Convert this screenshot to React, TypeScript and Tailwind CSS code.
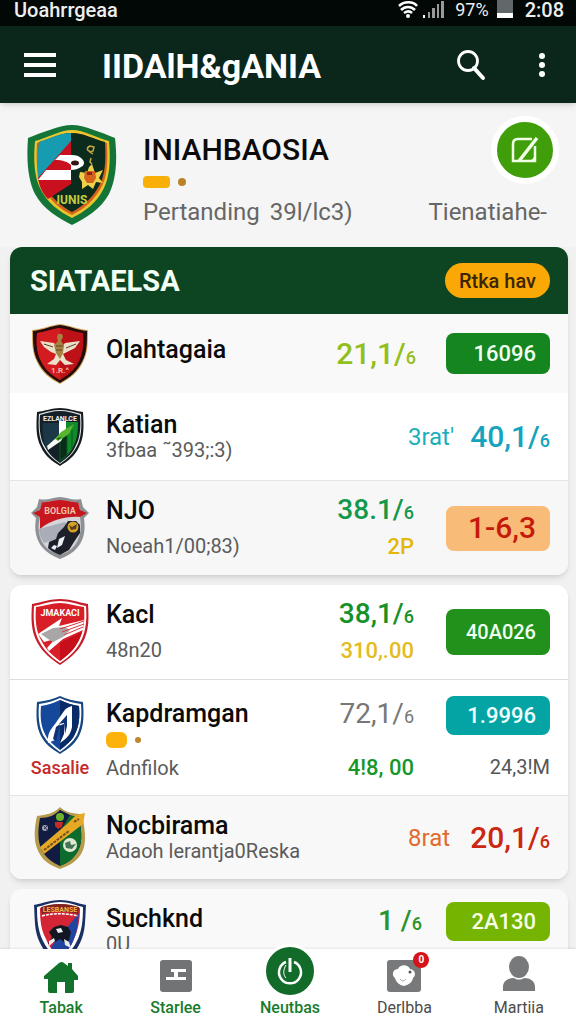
import type { ReactNode } from 'react';

const crestFont = 'font-[Roboto,sans-serif] font-bold';

function MainCrest() {
  return (
    <svg viewBox="0 0 90 102" className="h-[102px] w-[90px] shrink-0" role="img" aria-label="Club crest">
      <path d="M45 1C57 1 75 9 88 14c3 26 0 44-6 56-8 15-23 24-37 31C31 94 16 85 8 70 2 58-1 40 1 14 14 9 33 1 45 1Z" fill="#157538" />
      <path d="M45 6c12 0 25 8 37 11 2 22 0 37-5 47-7 15-20 24-32 30C33 88 20 79 13 64 8 54 6 39 8 17 20 14 33 6 45 6Z" fill="#e9c62d" />
      <path d="M45 9c12 0 23 7 35 10 1 20 0 33-5 43-7 14-18 23-30 29C33 85 22 76 15 62c-5-10-6-23-5-43C22 16 33 9 45 9Z" fill="#d5631d" />
      <path d="M45 9c12 0 21 6 33 9 1 20 0 32-5 42-7 14-17 22-28 28C34 82 24 74 17 60c-5-10-6-22-5-42C24 15 33 9 45 9Z" fill="#0b2c1d" />
      <path d="M44 9v10L11 54C10 43 10 30 12 18 24 14 33 9 44 9Z" fill="#169bb0" />
      <path d="M44 17v43L21 75C15 69 12 61 11 54Z" fill="#c9101f" />
      <path d="M28 36 33 31h12c4 0 7 1 9 3 4 3 4 7 0 9-3 2-6 3-10 3v-5c-3-3-8-5-16-5Z" fill="#fff" />
      <path d="M19 46h25v10H11Z" fill="#fff" />
      <ellipse cx="48" cy="39" rx="4" ry="2.500" fill="#35151a" />
      <path d="M63 22c-4 2-3 5 0 5m0-5 4 1-1 4-3 1 3 2m-2 4-1 4 2 2" stroke="#c9a83c" strokeWidth="1.500" fill="none" />
      <path d="m53 48 7 1 2-6 3-3 2 6 1 3 8-3-4 8 4 5-7-1-3 7-5-4-6 4v-7l-3-5Z" fill="#efd04a" />
      <path d="M58 47h10l1 7-3 5h-6l-3-5Z" fill="#d4611c" />
      <path d="M60 48h5v3h-5z" fill="#8e231d" />
      <text x="45" y="80" textAnchor="middle" fontSize="12" fill="#c8cb3f" className={crestFont}>IUNIS</text>
    </svg>
  );
}

function EagleCrest() {
  return (
    <svg viewBox="0 0 58 62" className="h-[62px] w-[58px]" role="img" aria-label="Eagle crest">
      <path d="M29 1c9 1 17 5 28 6 0 13 0 23-5 32-5 11-14 17-23 22C19 56 11 50 6 39 1 30 1 20 1 7 12 6 20 2 29 1Z" fill="#d5a95c" />
      <path d="M29 2c9 1 17 5 27 6 0 13 0 22-5 31-5 10-13 16-22 21C20 55 12 49 7 39 2 30 2 20 2 8 12 7 20 3 29 2Z" fill="#270c0c" />
      <path d="M29 5c8 1 15 4 23 5 1 12 0 20-4 28-4 9-11 14-19 19-8-5-15-10-19-19C6 30 5 22 6 10c8-1 15-4 23-5Z" fill="#bd1118" />
      <path d="M29 5v52C21 52 14 47 10 38 6 30 5 22 6 10c8-1 15-4 23-5Z" fill="#d31c20" />
      <path d="m9 18 14 2 2 4h6l3-4 15-2-5 7-8 4-4 2 3 6 8 4-9 1-5-5-4 5-9-1 7-5 2-5-5-2-7-5Z" fill="#ece0ca" />
      <path d="M27 11h4l1 3-2 4 3 4-1 8-3 6-4-6-2-8 4-4-1-4Z" fill="#a78243" />
      <path d="M25 23h7m-7 4h6M13 21l9 3m23-3-10 4" stroke="#58422a" strokeWidth="1" />
      <text x="29" y="50" textAnchor="middle" fontSize="8" fill="#f6b4a8" className={crestFont}>1.R.^</text>
    </svg>
  );
}

function GreenCrest() {
  return (
    <svg viewBox="0 0 48 60" className="h-[60px] w-12" role="img" aria-label="Green striped crest">
      <path d="M24 1c8 0 15 3 23 4 1 15 1 26-4 35-4 9-11 14-19 19-8-5-15-10-19-19C0 31 0 20 1 5 9 4 16 1 24 1Z" fill="#151c20" />
      <path d="M24 3c7 0 14 2 21 4 1 14 0 24-4 32-4 8-10 13-17 18C17 52 11 47 7 39 3 31 2 21 3 7c7-2 14-4 21-4Z" fill="#e6e8e8" />
      <path d="M24 4c7 0 13 2 20 4 1 13 0 23-4 30-3 8-9 13-16 18-7-5-12-10-16-18C4 31 3 21 4 8c7-2 13-4 20-4Z" fill="#142028" />
      <path d="M7 16h16v18L10 41C7 33 6 25 7 16Z" fill="#1b3848" />
      <path d="M24 15h18c0 10-1 17-4 23-3 7-8 12-14 16Z" fill="#118b2a" />
      <path d="M24 34v20l7-6V28Zm12-11v19" stroke="#075b21" strokeWidth="1" fill="#0a2c18" />
      <path d="M23 14h7v8l-7 10Z" fill="#fff" />
      <path d="m11 39 9-8 8-4-3 7-13 9Z" fill="#f8faf5" />
      <path d="m19 32 6-7 13-8-5 10-11 7Z" fill="#58b52e" />
      <path d="m21 31 5-1-4 3Z" fill="#194e18" />
      <text x="24" y="14" textAnchor="middle" fontSize="7" fill="#eee" className={crestFont}>EZLANLCE</text>
    </svg>
  );
}

function RiderCrest() {
  return (
    <svg viewBox="0 0 60 64" className="h-16 w-[60px]" role="img" aria-label="Rider crest">
      <path d="M30 1c7 0 12 4 21 2l2 8 6 6-5 5c2 14-1 23-7 30-4 5-10 8-17 11-8-3-14-7-18-12-6-8-8-17-6-29l-5-5 6-6 2-8c9 2 14-2 21-2Z" fill="#8e9193" />
      <path d="M30 4c7 0 12 3 18 2l2 8 4 3-4 4c2 12 0 21-5 28-4 5-9 8-15 10-6-2-12-5-16-10-5-7-7-16-4-28l-4-4 4-3 2-8c6 1 11-2 18-2Z" fill="#d3d5da" />
      <path d="M10 33V21l-7-4 7-3 2-8c6 1 11-2 18-2s12 3 18 2l2 8 7 3-7 4c-14-1-29 3-40 12Z" fill="#c7161d" />
      <path d="m9 33 26-7 2 3-10 14-13 4c-3-4-5-9-5-14Z" fill="#a8adb8" />
      <path d="m18 52 1-6 7-3 2-6 6-6 4-6 8 0 4 4v8l-6 9-5 8-9 5c-5-2-9-4-12-7Z" fill="#1d2029" />
      <path d="m29 43 6-3-3 9-5 3Zm-5 6 3 1-2 4-4-2Z" fill="#eef0f3" />
      <circle cx="43" cy="31" r="5.500" fill="#d6a128" />
      <path d="m39 29 3 2 5-3-1 5-5 1Z" fill="#574020" />
      <text x="30" y="18" textAnchor="middle" fontSize="9" fill="#efc3aa" className={crestFont}>BOLGIA</text>
    </svg>
  );
}

function RedCrest() {
  return (
    <svg viewBox="0 0 58 66" className="h-[66px] w-[58px]" role="img" aria-label="Red crest">
      <path d="M29 0c9 0 18 3 28 5 1 15 1 27-5 38-5 10-14 17-23 23C20 60 11 53 6 43 0 32 0 20 1 5 11 3 20 0 29 0Z" fill="#c81c28" />
      <path d="M29 2c9 0 17 3 26 5 1 14 0 25-5 35s-12 16-21 22C20 58 13 52 8 42 3 32 2 21 3 7c9-2 17-5 26-5Z" fill="#fff" />
      <path d="M29 4c8 0 16 3 24 4 1 13 0 24-5 33-5 10-11 15-19 21-8-6-14-11-19-21C5 32 4 21 5 8c8-1 16-4 24-4Z" fill="#d81e27" />
      <path d="m7 35 24-16-3 8 25-6-1 10-20 9-14 12-2-3 8-9-11 3Z" fill="#fff" />
      <path d="m10 35 12-6 12-1 5 3-7 7-10 5-5-3Z" fill="#a8a6a7" />
      <path d="m29 30 24-8m-22 11 22-8m-20 11 19-8" stroke="#d83a40" strokeWidth="1" />
      <path d="M29 44v18c8-6 14-11 19-21l3-8Z" fill="#c60f1b" />
      <text x="29" y="17" textAnchor="middle" fontSize="9" fill="#fff" className={crestFont}>JMAKACI</text>
    </svg>
  );
}

function BlueCrest() {
  return (
    <svg viewBox="0 0 48 58" className="h-[58px] w-12" role="img" aria-label="Blue crest">
      <path d="M24 0c6 3 14 5 23 6 1 14 1 24-4 34-4 8-11 13-19 18C16 53 9 48 5 40 0 30 0 20 1 6c9-1 17-3 23-6Z" fill="#174780" />
      <path d="M24 2c6 3 13 5 21 6 1 13 0 22-4 31-4 7-10 12-17 17C17 51 11 46 7 39 3 30 2 21 3 8c8-1 15-3 21-6Z" fill="#fff" />
      <path d="M24 4c6 3 12 5 19 6 1 12 0 20-4 28-3 7-9 11-15 16C18 49 12 45 9 38 5 30 4 22 5 10c7-1 13-3 19-6Z" fill="#15489b" />
      <path d="M24 4v50c6-5 12-9 15-16 4-8 5-16 4-28-7-1-13-3-19-6Z" fill="#092b68" />
      <path d="M36 10v21c-1 6-4 11-12 16l4-9v-10l-6 2-3 14-7 3c-1-8 2-13 7-19l9-13c2-3 5-4 8-5Z" fill="#fff" />
      <path d="M31 19v11l-2 8-1-11-5 1Z" fill="#0d3275" />
      <path d="m20 31 4-3-4 17-3-2Z" fill="#0d3275" />
    </svg>
  );
}

function SashCrest() {
  return (
    <svg viewBox="0 0 52 64" className="h-16 w-[52px]" role="img" aria-label="Crest with sash">
      <path d="M26 1c5 5 13 7 22 7 4 20 5 33-3 43-5 6-11 9-19 12-8-3-15-7-19-13C0 40-1 28 3 10c9-1 18-3 23-9Z" fill="#b59b4b" />
      <path d="M26 4c5 4 11 6 19 7 3 17 4 28-3 37-4 6-9 9-16 12-7-3-12-7-16-12-6-9-7-20-4-36 9 0 15-3 20-8Z" fill="#121b42" />
      <path d="M26 4v56c7-3 12-6 16-12 7-9 6-20 3-37-8-1-14-3-19-7Z" fill="#0c6b2d" />
      <path d="m26 4 10 5-12 20-10 1Z" fill="#121b42" />
      <path d="m6 41 4 7 39-30 2-11-9 2-9 9Z" fill="#e6a825" />
      <path d="m10 44 25-19m5-9 5-3" stroke="#73501f" strokeWidth="2" strokeDasharray="3 1" />
      <circle cx="26" cy="11" r="4" fill="#6eb12d" />
      <path d="M21 16h8l-1 5-4 2-3-3Z" fill="#c62b24" />
      <circle cx="11" cy="22" r="3" fill="#a4a1b1" />
      <path d="m10 20 3 4m-3-1 3-3" stroke="#35355b" />
      <circle cx="36" cy="39" r="7" fill="#dfe9cf" />
      <path d="m31 37 5-2 1 4 5-1-4 5-6-1Z" fill="#43745a" />
    </svg>
  );
}

function TwoToneCrest() {
  return (
    <svg viewBox="0 0 54 64" className="h-16 w-[54px]" role="img" aria-label="Red and blue crest">
      <path d="M27 1c8 0 17 3 26 5-1 14 0 26-6 38-4 9-10 15-20 19C17 59 11 53 7 44 1 32 2 20 1 6c9-2 18-5 26-5Z" fill="#1a2f62" />
      <path d="M27 3c8 0 15 3 23 5 0 13-1 24-6 34-4 8-9 14-17 18-8-4-13-10-17-18C5 32 4 21 4 8c8-2 15-5 23-5Z" fill="#fff" />
      <path d="M27 5c7 0 13 2 20 4 0 12-2 22-6 31-3 8-7 13-14 17-7-4-11-9-14-17C8 31 7 21 7 9c7-2 13-4 20-4Z" fill="#d32535" />
      <path d="M46 14c-1 11-2 19-5 26-3 8-7 13-14 17-4-3-7-6-9-9Z" fill="#2045a0" />
      <path d="M8 8c13-4 25-4 38 0l-1 7c-12-3-24-3-36 0Z" fill="#7d251e" />
      <path d="M9 17c12-3 24-3 36 0" stroke="#fff" strokeWidth="1.500" strokeDasharray="3 1" fill="none" />
      <path d="m16 33 5-5 7-2 7 2 3 5-2 8-4 3-5-4-5 3-7 2 4-7Z" fill="#111622" />
      <path d="m23 30 5-1 2 4-5 1m-9 8 5-3 1 3-6 5m15-7 5 3 2 6-6-3" fill="#e9ebed" />
      <text x="27" y="13" textAnchor="middle" fontSize="7" fill="#f3b448" className={crestFont}>LESBANSE</text>
    </svg>
  );
}

function Crest({ children, label }: { children: ReactNode; label?: string }) {
  return (
    <div className="flex w-[60px] shrink-0 flex-col items-center">
      {children}
      {label && <span className="mt-0.5 text-lg leading-6 font-medium text-[#c52a2a]">{label}</span>}
    </div>
  );
}

function Names({ name, sub, spaced }: { name: string; sub?: string; spaced?: boolean }) {
  return (
    <div className={spaced ? 'flex min-w-0 flex-1 flex-col gap-2.5' : 'flex min-w-0 flex-1 flex-col'}>
      <h3 className="text-[25px] leading-[26px] font-medium whitespace-nowrap text-[#0b0b0b]">{name}</h3>
      {sub && <p className="text-xl leading-6 whitespace-nowrap text-[#5b5b5b]">{sub}</p>}
    </div>
  );
}

function Ratio({ value, className }: { value: string; className: string }) {
  return (
    <span className={`whitespace-nowrap ${className}`}>
      {value}/<span className="text-lg leading-6">6</span>
    </span>
  );
}

function Score({ className, children }: { className: string; children: ReactNode }) {
  return (
    <button type="button" className={`w-26 shrink-0 rounded-lg pr-3.5 text-right ${className}`}>
      {children}
    </button>
  );
}

const row = 'flex items-center gap-4 pr-[18px] pl-5';

function NavItem({ label, green, children }: { label: string; green?: boolean; children: ReactNode }) {
  return (
    <a href="#" className="flex flex-1 flex-col items-center justify-end">
      {children}
      <span className={green ? 'text-base leading-5 font-medium text-[#197c2c]' : 'text-base leading-5 text-[#4b4b4b]'}>{label}</span>
    </a>
  );
}

export default function App() {
  return (
    <div className="flex h-dvh flex-col bg-[#f1f1f1] font-[Roboto,sans-serif]">
      <div className="flex h-[26px] shrink-0 items-start justify-between bg-[#020806] pr-3 pl-3.5 text-xl leading-5 font-medium text-[#eeeeee]">
        <span>Uoahrrgeaa</span>
        <div className="flex items-start gap-2">
          <svg viewBox="0 0 50 20" className="h-5 w-[50px]" aria-hidden="true">
            <path d="M2 6c5-5 14-5 18 0M4 10c4-4 10-4 14 0M7 13c3-2 6-2 8 0" stroke="#fff" strokeWidth="2.500" fill="none" />
            <circle cx="11" cy="16" r="2" fill="#fff" />
            <path d="M26 15h2v3h-2z" fill="#fff" />
            <path d="M31 12h2v6h-2zM35 8h3v10h-3zM40 4h2v14h-2zM44 1h3v17h-3z" fill="#999" />
          </svg>
          <span className="text-lg leading-5 font-normal">97%</span>
          <svg viewBox="0 0 16 20" className="h-5 w-4" aria-hidden="true">
            <path d="M0 0h16v13H0z" fill="#62686a" />
            <path d="M0 13h16v5H0z" fill="#fff" />
          </svg>
          <span className="pl-1">2:08</span>
        </div>
      </div>

      <header className="z-10 flex h-[77px] shrink-0 items-center bg-[#0b271c] pr-6 pl-6 text-white shadow-md">
        <button type="button" aria-label="Menu" className="flex w-8 flex-col gap-1.5 pt-px">
          <span className="h-1 w-full bg-white" />
          <span className="h-1 w-full bg-white" />
          <span className="h-1 w-full bg-white" />
        </button>
        <h1 className="flex-1 pt-0.5 pl-[46px] text-[34px] leading-10 font-bold whitespace-nowrap">IIDAlH&amp;gANIA</h1>
        <button type="button" aria-label="Search">
          <svg viewBox="0 0 30 32" className="h-8 w-[30px]" fill="none" stroke="#fff">
            <circle cx="12" cy="12" r="9.500" strokeWidth="2.800" />
            <path d="m18 19 9 10" strokeWidth="4" strokeLinecap="round" />
          </svg>
        </button>
        <button type="button" aria-label="More" className="ml-[46px] flex w-5 flex-col items-center gap-[3px]">
          <span className="size-1.5 rounded-full bg-white" />
          <span className="size-1.5 rounded-full bg-white" />
          <span className="size-1.5 rounded-full bg-white" />
        </button>
      </header>

      <main className="min-h-0 flex-1 overflow-y-auto [scrollbar-width:none]">
        <section className="flex h-36 gap-[26px] bg-[#f5f5f5] pt-[21px] pr-[29px] pl-[27px]">
          <MainCrest />
          <div className="min-w-0 flex-1 pt-2">
            <h2 className="text-3xl leading-9 font-medium whitespace-nowrap text-[#0b0b0b]">INIAHBAOSIA</h2>
            <div className="mt-2 flex items-center gap-2">
              <span className="h-3 w-[27px] rounded bg-[#f8b008]" />
              <span className="size-2 rounded-full bg-[#b98128]" />
            </div>
            <p className="mt-2 flex gap-2.5 text-2xl leading-8 whitespace-nowrap text-[#666666]">
              <span>Pertanding</span>
              <span>39l/lc3)</span>
            </p>
          </div>
          <div className="flex flex-col items-end">
            <button type="button" aria-label="Edit" className="-mt-2 -mr-3 flex size-[68px] items-center justify-center rounded-full border-[6px] border-white bg-[#3f9e0a]">
              <svg viewBox="0 0 28 28" className="size-7" fill="none" stroke="#f0ffe6" strokeWidth="2.500">
                <path d="M21 3H7Q2 3 2 8v17h22V10" />
                <path d="M26 2 8 25" strokeWidth="3.500" />
                <path d="M25 16v10H15q8-1 10-10Z" fill="#f0ffe6" stroke="none" />
              </svg>
            </button>
            <p className="mt-3 text-2xl leading-8 whitespace-nowrap text-[#666666]">Tienatiahe-</p>
          </div>
        </section>

        <div className="flex flex-col gap-2.5 pr-2 pb-4 pl-2.5">
          <section className="overflow-hidden rounded-xl bg-white shadow-md">
            <div className="flex h-[67px] items-center justify-between bg-[#0d4522] pr-[18px] pl-5">
              <h2 className="text-[29px] leading-9 font-bold text-[#f3fff5]">SIATAELSA</h2>
              <button type="button" className="h-[35px] rounded-full bg-[#f9a805] px-3.5 text-xl leading-6 font-medium text-[#3a2500]">Rtka hav</button>
            </div>
            <div className={`${row} h-[79px] bg-[#f9f9f9]`}>
              <Crest><EagleCrest /></Crest>
              <div className="flex min-w-0 flex-1 pb-2"><Names name="Olahtagaia" /></div>
              <Ratio value="21,1" className="text-3xl leading-10 font-medium text-[#93bf1d]" />
              <div className="pl-3.5"><Score className="h-[41px] bg-[#15851f] text-[22px] font-medium text-[#f0fff0]">16096</Score></div>
            </div>
            <div className={`${row} h-[87px]`}>
              <Crest><GreenCrest /></Crest>
              <Names name="Katian" sub="3fbaa ˜393;:3)" />
              <span className="text-2xl text-[#1daebb]">3rat&#39;</span>
              <Ratio value="40,1" className="text-3xl leading-10 font-medium text-[#15a3bd]" />
            </div>
            <div className={`${row} h-[95px] border-t border-[#e4e4e4] bg-[#f7f7f7]`}>
              <Crest><RiderCrest /></Crest>
              <Names name="NJO" sub="Noeah1/00;83)" spaced />
              <div className="flex flex-col items-end gap-2.5">
                <Ratio value="38.1" className="text-[28px] leading-[26px] font-medium text-[#14984c]" />
                <span className="text-[22px] leading-6 font-medium text-[#e4b70a]">2P</span>
              </div>
              <div className="pl-4"><Score className="h-[45px] bg-[#f9bc78] text-3xl leading-9 font-medium text-[#c41b0c]">1-6,3</Score></div>
            </div>
          </section>

          <section className="overflow-hidden rounded-xl bg-white shadow-md">
            <div className={`${row} h-[94px]`}>
              <Crest><RedCrest /></Crest>
              <Names name="Kacl" sub="48n20" spaced />
              <div className="flex flex-col items-end gap-2.5">
                <Ratio value="38,1" className="text-[28px] leading-[26px] font-medium text-[#15912a]" />
                <span className="text-[22px] leading-6 font-medium text-[#e3bb22]">310,.00</span>
              </div>
              <div className="pl-4"><Score className="h-[46px] bg-[#21911b] text-xl font-medium text-[#f0fff0]">40A026</Score></div>
            </div>
            <div className="flex h-[116px] gap-4 border-t border-[#dddddd] pt-4 pr-[18px] pl-5">
              <Crest label="Sasalie"><BlueCrest /></Crest>
              <div className="min-w-0 flex-1 pt-1">
                <h3 className="text-[25px] leading-7 font-medium whitespace-nowrap text-[#0b0b0b]">Kapdramgan</h3>
                <div className="mt-1 flex h-4 items-center gap-2">
                  <span className="h-4 w-[21px] rounded-md bg-[#fbb20b]" />
                  <span className="size-1.5 rounded-full bg-[#bd8730]" />
                </div>
                <p className="mt-2 text-xl leading-6 text-[#5b5b5b]">Adnfilok</p>
              </div>
              <div className="flex flex-col items-end">
                <Ratio value="72,1" className="text-[28px] leading-9 text-[#777777]" />
                <span className="mt-6 text-[22px] leading-6 font-medium whitespace-nowrap text-[#15972a]">4!8, 00</span>
              </div>
              <div className="flex flex-col items-end pl-4">
                <Score className="h-[39px] bg-[#05a4a4] text-[22px] font-medium text-[#efffff]">1.9996</Score>
                <span className="mt-5 text-xl leading-6 text-[#555555]">24,3!M</span>
              </div>
            </div>
            <div className={`${row} h-[84px] border-t border-[#e4e4e4] bg-[#f8f8f8]`}>
              <Crest><SashCrest /></Crest>
              <Names name="Nocbirama" sub="Adaoh lerantja0Reska" />
              <span className="text-2xl text-[#e26a2d]">8rat</span>
              <Ratio value="20,1" className="pl-1 text-3xl leading-10 font-medium text-[#cc2711]" />
            </div>
          </section>

          <section className="flex h-24 gap-4 overflow-hidden rounded-xl bg-[#f9f9f9] pt-2.5 pr-[18px] pl-5 shadow-md">
            <Crest><TwoToneCrest /></Crest>
            <div className="flex min-w-0 flex-1 pt-[7px]"><Names name="Suchknd" sub="0U" /></div>
            <Ratio value="1 " className="pt-0.5 text-[28px] leading-10 font-medium text-[#28942b]" />
            <div className="pt-[3px] pl-2"><Score className="h-[39px] bg-[#75b400] text-[22px] font-medium text-[#f7ffe6]">2A130</Score></div>
          </section>
        </div>
      </main>

      <nav className="z-10 flex h-[75px] shrink-0 bg-white pb-1.5 pl-1 shadow-[0_-1px_2px_rgba(0,0,0,0.08)]">
        <NavItem label="Tabak" green>
          <svg viewBox="0 0 36 34" className="mb-1 h-[34px] w-9" aria-hidden="true">
            <path d="m1 16 15-13q3-2 5 0l4 3V3h4v6l6 7v4h-4v11q0 2-2 2h-7V22h-8v11H7q-2 0-2-2V19H1Z" fill="#12712a" />
          </svg>
        </NavItem>
        <NavItem label="Starlee" green>
          <svg viewBox="0 0 32 32" className="mb-1.5 size-8" aria-hidden="true">
            <rect width="32" height="32" rx="3" fill="#717374" />
            <path d="M11 9h15v3h-8v5h8v3H6v-3h8v-5h-3Z" fill="#fff" />
          </svg>
        </NavItem>
        <NavItem label="Neutbas" green>
          <span className="flex size-[54px] shrink-0 items-center justify-center rounded-full border-[3px] border-white bg-[#126b28]">
            <svg viewBox="0 0 28 28" className="size-7" fill="none" stroke="#fff" aria-hidden="true">
              <path d="M10 5a11 11 0 1 0 8 0" strokeWidth="2.500" />
              <path d="M14 1v14" strokeWidth="3" />
              <path d="M10 8c-3 5-3 10 0 13" strokeWidth="1" />
            </svg>
          </span>
        </NavItem>
        <NavItem label="Derlbba">
          <span className="relative mb-1.5">
            <svg viewBox="0 0 34 32" className="h-8 w-[34px]" aria-hidden="true">
              <rect width="34" height="32" rx="3" fill="#77797a" />
              <path d="M11 9c2-5 10-5 12 0 6 1 6 7 3 9-1 5-5 7-9 8-5-1-8-4-9-8-4-3-2-9 3-9Z" fill="#fff" />
              <circle cx="23" cy="12" r="1.500" fill="#555" />
              <path d="M13 19q3 4 6 0" stroke="#aaa" fill="none" />
            </svg>
            <span className="absolute -top-2 -right-2 flex size-4 items-center justify-center rounded-full bg-[#d7131a] text-[10px] leading-3 font-bold text-white">0</span>
          </span>
        </NavItem>
        <NavItem label="Martiia">
          <svg viewBox="0 0 34 36" className="mb-1.5 h-9 w-[34px]" aria-hidden="true">
            <ellipse cx="17" cy="11" rx="10" ry="11" fill="#77797a" />
            <path d="M1 35v-4c0-6 5-9 11-9 3 2 7 2 10 0 6 0 11 3 11 9v4Z" fill="#77797a" />
          </svg>
        </NavItem>
      </nav>
    </div>
  );
}
